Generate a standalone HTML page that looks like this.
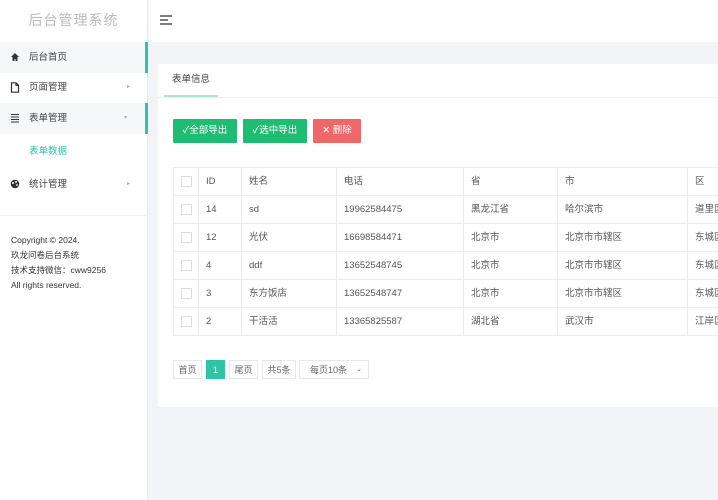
<!DOCTYPE html>
<html><head><meta charset="utf-8"><style>
*{margin:0;padding:0;box-sizing:border-box}
body{width:718px;height:500px;overflow:hidden;background:#f2f4f7;font-family:"Liberation Sans","Noto Sans CJK SC",sans-serif;font-size:9.5px;color:#555;position:relative}
.side{position:absolute;left:0;top:0;width:148px;height:500px;background:#fff;border-right:1px solid #e8eaed}
.logo{height:42px;line-height:40px;text-align:center;font-size:14px;color:#bbb;letter-spacing:1px}
.mi{position:absolute;left:0;width:148px;height:31px;line-height:31px;padding-left:29px;color:#444}
.mi.act{background:#f6f7f9;border-right:3px solid #2ec4a6}
.mi svg{position:absolute;left:10px;top:10px}
.mi .ar{position:absolute;right:18px;top:0;font-size:6px;color:#aaa}
.foot{position:absolute;left:11px;top:233px;line-height:15px;color:#333;font-size:8.5px}
.top{position:absolute;left:149px;top:0;right:0;height:42px;background:#fff}
.card{position:absolute;left:158px;top:64px;width:580px;height:343px;background:#fff}
.tab{position:absolute;left:6px;top:0;width:54px;height:33px;line-height:32px;text-align:center;border-bottom:2px solid #a8e6da;color:#444}
.tabline{position:absolute;left:0;right:0;top:33px;border-top:1px solid #eee}
.btn{position:absolute;top:55px;height:24px;line-height:24px;color:#fff;text-align:center;font-size:9.5px;border-radius:1px}
table{position:absolute;left:15px;top:103px;border-collapse:collapse;table-layout:fixed;width:600px}
td{border:1px solid #e9ebee;height:28px;padding:0 0 0 7px;color:#555;white-space:nowrap;overflow:hidden;line-height:27px;vertical-align:middle}
.cb{display:inline-block;width:11px;height:11px;border:1px solid #ddd;vertical-align:middle}
.pg{position:absolute;top:296px;height:19px;line-height:18px;border:1px solid #e8e8e8;text-align:center;color:#666;font-size:9px}
</style></head><body>
<div class="side">
<div class="logo">后台管理系统</div>
<div class="mi act" style="top:42px"><svg width="10" height="10"><path d="M5 1L1 5h1.5v4h2V7h1v2h2V5H9z" fill="#333"/></svg>后台首页</div>
<div class="mi" style="top:72px"><svg width="10" height="11"><path d="M1.5 .8h4.5l2.5 2.5v6.9h-7z M6 .8v2.5h2.5" fill="none" stroke="#333" stroke-width="1.2"/></svg>页面管理<span class="ar">&#9656;</span></div>
<div class="mi act" style="top:103px"><svg width="10" height="10"><path d="M1 1.5h8M1 4h8M1 6.5h8M1 9h8" stroke="#333" stroke-width="1.1"/></svg>表单管理<span class="ar">&#9662;</span></div>
<div class="mi" style="top:136px;color:#2ec4a6">表单数据</div>
<div class="mi" style="top:169px"><svg width="10" height="10"><circle cx="5" cy="5" r="4.3" fill="#333"/><circle cx="3" cy="4" r="1" fill="#fff"/><circle cx="6" cy="3" r="1" fill="#fff"/><circle cx="7" cy="6" r="0.9" fill="#fff"/></svg>统计管理<span class="ar">&#9656;</span></div>
<div style="position:absolute;left:0;width:148px;top:215px;border-top:1px solid #f0f0f0"></div>
<div class="foot">Copyright © 2024.<br>玖龙问卷后台系统<br>技术支持微信：cww9256<br>All rights reserved.</div>
</div>
<div class="top"><svg style="position:absolute;left:10px;top:14px" width="14" height="12"><path d="M1 2h12M1 6h8M1 10h12" stroke="#333" stroke-width="1.3"/></svg></div>
<div class="card">
<div class="tab">表单信息</div><div class="tabline"></div>
<div class="btn" style="left:15px;width:64px;background:#1ebd73">✓全部导出</div>
<div class="btn" style="left:85px;width:64px;background:#1ebd73">✓选中导出</div>
<div class="btn" style="left:155px;width:48px;background:#f0676a">✕ 删除</div>
<table>
<colgroup><col style="width:25px"><col style="width:43px"><col style="width:95px"><col style="width:127px"><col style="width:94px"><col style="width:130px"><col style="width:86px"></colgroup>
<tr><td><span class="cb"></span></td><td>ID</td><td>姓名</td><td>电话</td><td>省</td><td>市</td><td>区</td></tr>
<tr><td><span class="cb"></span></td><td>14</td><td>sd</td><td>19962584475</td><td>黑龙江省</td><td>哈尔滨市</td><td>道里区</td></tr>
<tr><td><span class="cb"></span></td><td>12</td><td>光伏</td><td>16698584471</td><td>北京市</td><td>北京市市辖区</td><td>东城区</td></tr>
<tr><td><span class="cb"></span></td><td>4</td><td>ddf</td><td>13652548745</td><td>北京市</td><td>北京市市辖区</td><td>东城区</td></tr>
<tr><td><span class="cb"></span></td><td>3</td><td>东方饭店</td><td>13652548747</td><td>北京市</td><td>北京市市辖区</td><td>东城区</td></tr>
<tr><td><span class="cb"></span></td><td>2</td><td>干活活</td><td>13365825587</td><td>湖北省</td><td>武汉市</td><td>江岸区</td></tr>
</table>
<div class="pg" style="left:15px;width:29px">首页</div>
<div class="pg" style="left:48px;width:19px;background:#2ec4a6;border-color:#2ec4a6;color:#fff">1</div>
<div class="pg" style="left:71px;width:29px">尾页</div>
<div class="pg" style="left:104px;width:34px">共5条</div>
<div class="pg" style="left:141px;width:70px;text-align:left;padding-left:10px">每页10条<span style="position:absolute;right:6px;font-size:7px">&#8964;</span></div>
</div>
</body></html>
